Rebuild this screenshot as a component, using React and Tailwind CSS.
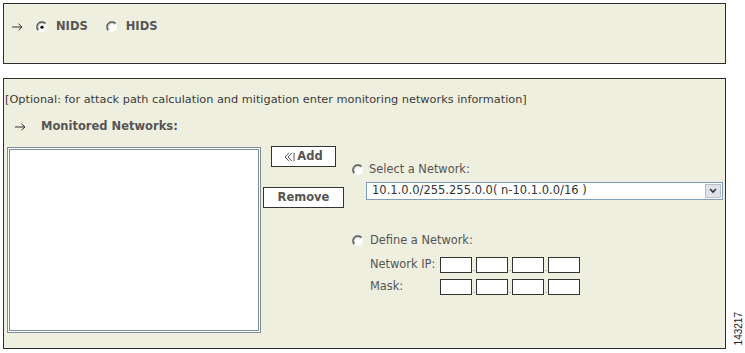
import React from 'react';

const Radio = ({ checked }) => (
  <svg width="12" height="12" viewBox="0 0 12 12" className="shrink-0">
    <circle cx="6" cy="6" r="5" fill="#ffffff" />
    <path d="M2.2 9.2 A4.6 4.6 0 0 1 9.6 2.6" fill="none" stroke="#555555" strokeWidth="1.5" />
    <path d="M3.2 8.4 A3.4 3.4 0 0 1 8.6 3.4" fill="none" stroke="#a8a8a8" strokeWidth="0.8" />
    {checked && <circle cx="6" cy="6.2" r="1.6" fill="#111111" />}
  </svg>
);

const Arrow = () => (
  <svg width="11" height="8" viewBox="0 0 11 8" className="shrink-0">
    <path d="M0 4 L10 4 M6.5 0.8 L10 4 L6.5 7.2" fill="none" stroke="#333" strokeWidth="1" />
  </svg>
);

const IpBoxes = () => (
  <div className="flex items-end">
    {[0, 1, 2, 3].map((i) => (
      <React.Fragment key={i}>
        {i > 0 && <span className="w-[4px] text-center text-[8px] leading-[8px] text-[#777]">.</span>}
        <div className="w-[32px] h-[16px] bg-white border border-[#333]" />
      </React.Fragment>
    ))}
  </div>
);

export default function App() {
  return (
    <div className="flex items-start w-[745px] h-[353px] bg-white font-['DejaVu_Sans','Verdana',sans-serif] text-[#444]">
      <div className="flex flex-col pl-[3px] pt-[3px] w-[726px]">
        {/* sensor type */}
        <div className="h-[61px] border border-[#2e2e2e] bg-[#efefdf] pl-[8px] pt-[15px]">
          <div className="flex items-center h-[16px]">
            <Arrow />
            <span className="ml-[13px]"><Radio checked /></span>
            <span className="ml-[8px] text-[11.5px] font-bold text-[#555]">NIDS</span>
            <span className="ml-[18px]"><Radio /></span>
            <span className="ml-[8px] text-[11.5px] font-bold text-[#555]">HIDS</span>
          </div>
        </div>

        {/* monitored networks */}
        <div className="mt-[14px] h-[271px] border border-[#2e2e2e] bg-[#efefdf]">
          <p className="mt-[14px] ml-[1px] text-[11.3px] leading-[13px] text-[#3a3a3a] whitespace-nowrap">
            [Optional: for attack path calculation and mitigation enter monitoring networks information]
          </p>
          <div className="flex items-center mt-[14px] pl-[11px] h-[13px]">
            <Arrow />
            <span className="ml-[15px] text-[11.5px] font-bold text-[#555]">Monitored Networks:</span>
          </div>

          <div className="flex items-start mt-[14px]">
            <div className="ml-[3px] w-[254px] h-[186px] bg-white border-[3px] border-double border-[#7d8d99]" />

            <div className="ml-[2px] w-[81px] -mt-[1px] flex flex-col items-center">
              <button className="w-[65px] h-[21px] bg-white border border-[#333] flex items-center justify-center gap-[2px] text-[11.5px] font-bold text-[#555]">
                <svg width="11" height="10" viewBox="0 0 11 10">
                  <path d="M5 0.8 L1 5 L5 9.2 M8 0.8 L4 5 L8 9.2 M10 0.8 L10 9.2" fill="none" stroke="#555" strokeWidth="1" />
                </svg>
                Add
              </button>
              <button className="mt-[20px] w-[81px] h-[21px] bg-white border border-[#333] text-[11.5px] font-bold text-[#555]">
                Remove
              </button>
            </div>

            <div className="ml-[8px] flex flex-col">
              <div className="flex items-center mt-[17px] h-[12px]">
                <Radio />
                <span className="ml-[5px] text-[11.4px] text-[#555]">Select a Network:</span>
              </div>
              <div className="ml-[14px] mt-[6px] w-[357px] h-[18px] bg-white border border-[#7f9db9] flex items-center justify-between">
                <span className="ml-[5px] text-[11.5px] text-[#333] whitespace-nowrap">10.1.0.0/255.255.0.0( n-10.1.0.0/16 )</span>
                <div className="mr-[1px] w-[16px] h-[14px] bg-[#dfe2ea] border border-[#b9bdc8] flex items-center justify-center">
                  <svg width="8" height="6" viewBox="0 0 8 6">
                    <path d="M1 1 L4 4 L7 1" fill="none" stroke="#333" strokeWidth="1.6" />
                  </svg>
                </div>
              </div>

              <div className="flex items-center mt-[35px] h-[12px]">
                <Radio />
                <span className="ml-[6px] text-[11.4px] text-[#555]">Define a Network:</span>
              </div>
              <div className="flex items-center ml-[18px] mt-[9px]">
                <span className="w-[70px] text-[11.4px] text-[#555]">Network IP:</span>
                <IpBoxes />
              </div>
              <div className="flex items-center ml-[18px] mt-[5px]">
                <span className="w-[70px] text-[11.4px] text-[#555]">Mask:</span>
                <IpBoxes />
              </div>
            </div>
          </div>
        </div>
      </div>

      <div className="self-end ml-[7px] mb-[8px] [writing-mode:vertical-rl] rotate-180 font-['Liberation_Sans',sans-serif] text-[10px] leading-[11px] text-[#222]">
        143217
      </div>
    </div>
  );
}
